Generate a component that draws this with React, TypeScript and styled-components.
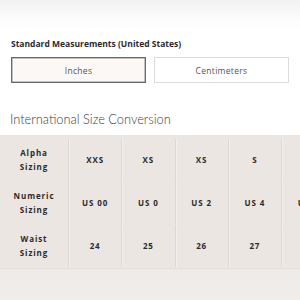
import React from "react";
import styled, { createGlobalStyle } from "styled-components";

const Global = createGlobalStyle`
  html, body { margin: 0; padding: 0; background: #fff; }
  body { width: 300px; height: 300px; overflow: hidden; font-family: "Open Sans", "Liberation Sans", sans-serif; }
`;

const Page = styled.div`
  width: 300px;
  height: 300px;
  background: linear-gradient(#f2f2f2 0px, #fbfbfb 18px, #ffffff 32px, #ffffff 100%);
  display: flex;
  flex-direction: column;
`;

const Section = styled.div`
  padding: 38px 11px 0 11px;
  display: flex;
  flex-direction: column;
`;

const Label = styled.div`
  font-size: 8.5px;
  font-weight: 700;
  letter-spacing: 0px;
  color: #2b2b2b;
  line-height: 12px;
`;

const Toggle = styled.div`
  margin-top: 7px;
  display: grid;
  grid-template-columns: 135px 135px;
  gap: 8px;
`;

const ToggleButton = styled.div<{ $active?: boolean }>`
  height: 26px;
  box-sizing: border-box;
  display: flex;
  align-items: center;
  justify-content: center;
  font-size: 8.5px;
  letter-spacing: 0.3px;
  color: #555;
  background: ${(p) => (p.$active ? "#fcf8f6" : "#ffffff")};
  border: 1px solid ${(p) => (p.$active ? "#6b6b6b" : "#dcdcdc")};
  box-shadow: ${(p) => (p.$active ? "inset 0 0 0 0.5px #8a8a8a" : "none")};
`;

const Heading = styled.div`
  margin: 27px 0 0 10px;
  font-family: Lato, "Open Sans", sans-serif;
  font-weight: 300;
  font-size: 12.8px;
  color: #3a3a3a;
  line-height: 18px;
`;

const TableArea = styled.div`
  margin-top: 7px;
  flex: 1;
  background: linear-gradient(#ece6e2, #ece6e2 132px, #eeeae7 133px, #f1edeb 100%);
  overflow: hidden;
`;

const Table = styled.div`
  display: grid;
  grid-template-columns: 68px repeat(6, 53.25px);
  padding-top: 4px;
  height: 129px;
  border-bottom: 1px solid #e4ddd9;
`;

const Cell = styled.div<{ $first?: boolean }>`
  height: 42px;
  display: flex;
  align-items: center;
  justify-content: center;
  text-align: center;
  font-size: 8px;
  font-weight: 700;
  letter-spacing: 0.9px;
  line-height: 14px;
  color: #2a2a2a;
  box-sizing: border-box;
  ${(p) => (p.$first ? "" : "border-left: 1px solid #ddd6d1; box-shadow: inset 1px 0 0 #f3efec;")}
`;

const rows: { label: [string, string]; values: string[] }[] = [
  { label: ["Alpha", "Sizing"], values: ["XXS", "XS", "XS", "S", "M", "M"] },
  { label: ["Numeric", "Sizing"], values: ["US 00", "US 0", "US 2", "US 4", "US 6", "US 8"] },
  { label: ["Waist", "Sizing"], values: ["24", "25", "26", "27", "28", "29"] },
];

export default function App() {
  return (
    <>
      <Global />
      <Page>
        <Section>
          <Label>Standard Measurements (United States)</Label>
          <Toggle>
            <ToggleButton $active>Inches</ToggleButton>
            <ToggleButton>Centimeters</ToggleButton>
          </Toggle>
        </Section>
        <Heading>International Size Conversion</Heading>
        <TableArea>
          <Table>
            {rows.map((r) => (
              <React.Fragment key={r.label[0]}>
                <Cell $first>
                  {r.label[0]}
                  <br />
                  {r.label[1]}
                </Cell>
                {r.values.map((v, i) => (
                  <Cell key={i}>{v}</Cell>
                ))}
              </React.Fragment>
            ))}
          </Table>
        </TableArea>
      </Page>
    </>
  );
}
